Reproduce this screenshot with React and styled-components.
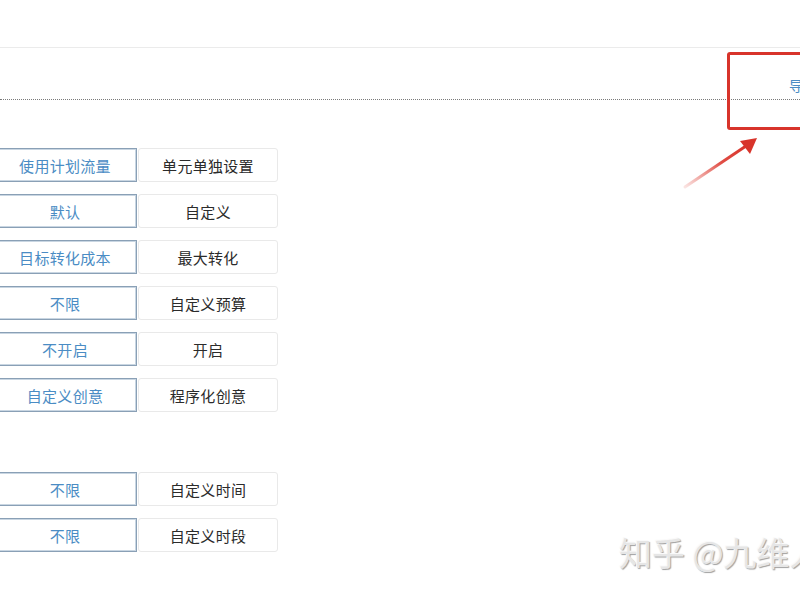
import React from 'react'
import styled, { createGlobalStyle } from 'styled-components'

const GlobalStyle = createGlobalStyle`
  html, body {
    margin: 0;
    padding: 0;
    background: #fff;
    font-family: "Noto Sans CJK SC", "Noto Sans", sans-serif;
  }
`

const rows = [
  { a: '使用计划流量', b: '单元单独设置' },
  { a: '默认', b: '自定义' },
  { a: '目标转化成本', b: '最大转化' },
  { a: '不限', b: '自定义预算' },
  { a: '不开启', b: '开启' },
  { a: '自定义创意', b: '程序化创意' },
  { gap: true },
  { a: '不限', b: '自定义时间' },
  { a: '不限', b: '自定义时段' }
]

const Page = styled.div`
  position: relative;
  width: 800px;
  height: 600px;
  overflow: hidden;
  background: #fff;
`

const Header = styled.div`
  height: 47px;
  border-bottom: 1px solid #ebebeb;
`

const Toolbar = styled.div`
  height: 52px;
  display: flex;
  justify-content: flex-end;
  align-items: flex-start;
  padding-top: 30px;
  box-sizing: border-box;
  border-bottom: 1px dotted #7a7a7a;
`

const ToolLink = styled.span`
  font-size: 14px;
  line-height: 14px;
  color: #4a8cc4;
  margin-right: -17px;
  white-space: nowrap;
`

const Form = styled.div`
  display: flex;
  flex-direction: column;
  gap: 12px;
  padding-top: 48px;
  margin-left: -7px;
`

const Row = styled.div`
  display: flex;
  height: 34px;
`

const Spacer = styled.div`
  height: 36px;
`

const Option = styled.div`
  box-sizing: border-box;
  width: ${({ active }) => (active ? '144px' : '140px')};
  height: 34px;
  display: flex;
  align-items: center;
  justify-content: center;
  font-size: 15px;
  letter-spacing: 0.3px;
  color: ${({ active }) => (active ? '#4a8cc4' : '#2b2b2b')};
  border: 1px solid ${({ active }) => (active ? '#8aa0b6' : '#e9e9e9')};
  border-radius: ${({ active }) => (active ? '0' : '3px')};
  box-shadow: ${({ active }) => (active ? 'inset 0 0 0 1px #c9d6e2' : 'none')};
  margin-left: ${({ active }) => (active ? '0' : '1px')};
  background: #fff;
`

const Highlight = styled.div`
  position: absolute;
  left: 727px;
  top: 52px;
  width: 90px;
  height: 78px;
  box-sizing: border-box;
  border: 3px solid #d8342b;
  border-radius: 3px;
`

const Arrow = styled.svg`
  position: absolute;
  left: 680px;
  top: 130px;
`

const Watermark = styled.div`
  position: absolute;
  left: 619px;
  top: 532px;
  font-size: 33px;
  line-height: 40px;
  color: #e6e6e6;
  white-space: nowrap;
  text-shadow: -1px -1px 0 #fafafa, 1px 1px 1px #a0a0a0;
`

const App = () => (
  <Page>
    <GlobalStyle />
    <Header />
    <Toolbar>
      <ToolLink>导入</ToolLink>
    </Toolbar>
    <Form>
      {
        rows.map((r, i) => (
          r.gap
            ? <Spacer key={i} />
            : <Row key={i}>
              <Option active>{r.a}</Option>
              <Option>{r.b}</Option>
            </Row>
        ))
      }
    </Form>
    <Highlight />
    <Arrow width="90" height="64" viewBox="0 0 90 64">
      <defs>
        <linearGradient id="arrowFade" x1="0" y1="1" x2="1" y2="0">
          <stop offset="0" stopColor="#e04a40" stopOpacity="0.15" />
          <stop offset="0.6" stopColor="#dd3a30" stopOpacity="0.9" />
          <stop offset="1" stopColor="#d8342b" />
        </linearGradient>
      </defs>
      <path d="M5 57 L66 16" stroke="url(#arrowFade)" strokeWidth="3" strokeLinecap="round" />
      <path d="M77 8 L60 11 L70 24 Z" fill="#d8342b" />
    </Arrow>
    <Watermark>知乎 @九维人</Watermark>
  </Page>
)

export default App
